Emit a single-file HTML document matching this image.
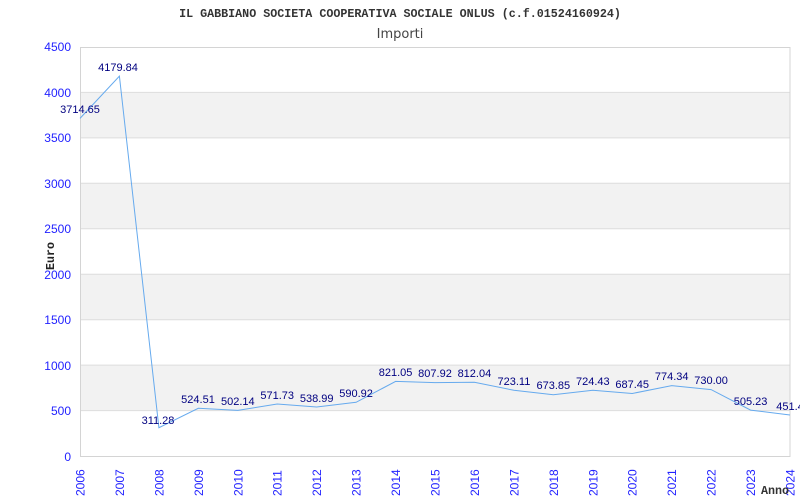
<!DOCTYPE html>
<html><head><meta charset="utf-8"><style>html,body{margin:0;padding:0;background:#fff}svg{display:block}</style></head>
<body>
<svg width="800" height="500" xmlns="http://www.w3.org/2000/svg">
<text x="400" y="17" text-anchor="middle" font-family="Liberation Mono, monospace" font-weight="bold" font-size="11.7" fill="#333">IL GABBIANO SOCIETA COOPERATIVA SOCIALE ONLUS (c.f.01524160924)</text>
<text x="400" y="38" text-anchor="middle" font-family="DejaVu Sans, sans-serif" font-size="13" fill="#444">Importi</text>
<g fill="#f2f2f2">
<rect x="80" y="92.4" width="710" height="45.5"/>
<rect x="80" y="183.3" width="710" height="45.5"/>
<rect x="80" y="274.2" width="710" height="45.5"/>
<rect x="80" y="365.1" width="710" height="45.5"/>
</g>
<g stroke="#dddddd" stroke-width="1">
<line x1="80" x2="790" y1="92.4" y2="92.4"/><line x1="80" x2="790" y1="137.9" y2="137.9"/>
<line x1="80" x2="790" y1="183.3" y2="183.3"/><line x1="80" x2="790" y1="228.8" y2="228.8"/>
<line x1="80" x2="790" y1="274.2" y2="274.2"/><line x1="80" x2="790" y1="319.7" y2="319.7"/>
<line x1="80" x2="790" y1="365.1" y2="365.1"/><line x1="80" x2="790" y1="410.6" y2="410.6"/>
</g>
<rect x="80.5" y="47.5" width="709.5" height="409" fill="none" stroke="#d4d4d4"/>
<g font-family="Liberation Sans, sans-serif" font-size="12" fill="#2222ff" text-anchor="end">
<text x="71" y="51">4500</text><text x="71" y="97">4000</text><text x="71" y="142">3500</text>
<text x="71" y="188">3000</text><text x="71" y="233">2500</text><text x="71" y="279">2000</text>
<text x="71" y="324">1500</text><text x="71" y="370">1000</text><text x="71" y="415">500</text>
<text x="71" y="461">0</text>
</g>
<text transform="translate(54,256) rotate(-90)" text-anchor="middle" font-family="Liberation Mono, monospace" font-weight="bold" font-size="11.7" fill="#222">Euro</text>
<polyline fill="none" stroke="#66aaee" stroke-width="1" points="80,118.4 119.4,76.1 158.9,427.7 198.3,408.3 237.8,410.4 277.2,404 316.7,407 356.1,402.3 395.6,381.4 435,382.6 474.4,382.2 513.9,390.3 553.3,394.8 592.8,390.2 632.2,393.5 671.7,385.6 711.1,389.6 750.6,410.1 790,415"/>
<g font-family="Liberation Sans, sans-serif" font-size="11" fill="#000080" text-anchor="middle">
<text x="80" y="113">3714.65</text><text x="118" y="71">4179.84</text><text x="158" y="424">311.28</text>
<text x="198" y="403">524.51</text><text x="237.8" y="405">502.14</text><text x="277.2" y="399">571.73</text>
<text x="316.7" y="402">538.99</text><text x="356.1" y="397">590.92</text><text x="395.6" y="376">821.05</text>
<text x="435" y="377">807.92</text><text x="474.4" y="377">812.04</text><text x="513.9" y="385">723.11</text>
<text x="553.3" y="389">673.85</text><text x="592.8" y="385">724.43</text><text x="632.2" y="388">687.45</text>
<text x="671.7" y="380">774.34</text><text x="711.1" y="384">730.00</text><text x="750.6" y="405">505.23</text>
<text x="790" y="410">451.4</text>
</g>
<g font-family="Liberation Sans, sans-serif" font-size="12" fill="#2222ff">
<text transform="translate(84.5,496) rotate(-90)">2006</text>
<text transform="translate(123.9,496) rotate(-90)">2007</text>
<text transform="translate(163.4,496) rotate(-90)">2008</text>
<text transform="translate(202.8,496) rotate(-90)">2009</text>
<text transform="translate(242.3,496) rotate(-90)">2010</text>
<text transform="translate(281.7,496) rotate(-90)">2011</text>
<text transform="translate(321.2,496) rotate(-90)">2012</text>
<text transform="translate(360.6,496) rotate(-90)">2013</text>
<text transform="translate(400.1,496) rotate(-90)">2014</text>
<text transform="translate(439.5,496) rotate(-90)">2015</text>
<text transform="translate(478.9,496) rotate(-90)">2016</text>
<text transform="translate(518.4,496) rotate(-90)">2017</text>
<text transform="translate(557.8,496) rotate(-90)">2018</text>
<text transform="translate(597.3,496) rotate(-90)">2019</text>
<text transform="translate(636.7,496) rotate(-90)">2020</text>
<text transform="translate(676.2,496) rotate(-90)">2021</text>
<text transform="translate(715.6,496) rotate(-90)">2022</text>
<text transform="translate(755.1,496) rotate(-90)">2023</text>
<text transform="translate(794.5,496) rotate(-90)">2024</text>
</g>
<text x="761" y="494" font-family="Liberation Mono, monospace" font-weight="bold" font-size="11.7" fill="#333">Anno</text>
</svg>
</body></html>
